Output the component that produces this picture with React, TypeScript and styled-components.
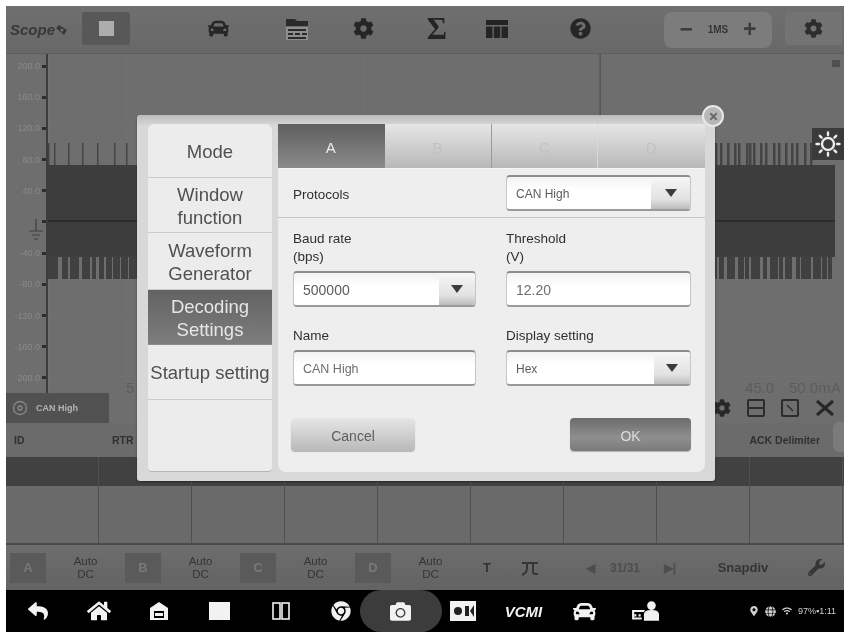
import React from "react";
import styled, { createGlobalStyle } from "styled-components";
import {
  FaCar,
  FaCog,
  FaQuestionCircle,
  FaReply,
  FaHome,
  FaCamera,
  FaChrome,
  FaWrench,
  FaMapMarkerAlt,
  FaGlobe,
  FaWifi,
  FaTimes,
} from "react-icons/fa";

const Global = createGlobalStyle`
  html, body { margin: 0; padding: 0; background: #fff; }
  body { font-family: "Liberation Sans", Arial, sans-serif; }
  * { box-sizing: border-box; }
`;

const Page = styled.div`
  width: 846px;
  height: 634px;
  padding: 6px 2px 2px 6px;
  background: #fff;
  overflow: hidden;
  filter: blur(0.7px);
`;

const Screen = styled.div`
  position: relative;
  width: 838px;
  height: 626px;
  display: flex;
  flex-direction: column;
  background: #6d6d6d;
`;

/* ---------- header ---------- */
const Header = styled.header`
  height: 48px;
  display: flex;
  align-items: center;
  padding: 0 0 0 4px;
  background: linear-gradient(#6f6f6f, #686868);
  border-bottom: 1px solid #5e5e5e;
`;
const Logo = styled.div`
  width: 72px;
  font: italic bold 15px "Liberation Sans", sans-serif;
  color: #383838;
  display: flex;
  align-items: center;
  gap: 1px;
`;
const StopButton = styled.div`
  width: 48px;
  height: 33px;
  margin-top: -2px;
  background: #585858;
  border-radius: 3px;
  display: flex;
  align-items: center;
  justify-content: center;
  &::before {
    content: "";
    width: 15px;
    height: 15px;
    background: #adadad;
  }
`;
const Toolbar = styled.div`
  display: flex;
  align-items: center;
  margin-left: 68px;
  height: 33px;
  margin-top: -2px;
`;
const ToolSlot = styled.div<{ $ml: number }>`
  width: 40px;
  height: 33px;
  margin-left: ${(p) => p.$ml}px;
  display: flex;
  align-items: center;
  justify-content: center;
  color: #262626;
  font-size: 21px;
`;
const Sigma = styled.span`
  font: bold 31px "Liberation Serif", serif;
  color: #242424;
  line-height: 1;
`;
const ZoomPill = styled.div`
  width: 108px;
  height: 36px;
  margin-left: 64px;
  background: #7c7c7c;
  border-radius: 8px;
  display: flex;
  align-items: center;
  justify-content: space-around;
  padding: 0 8px;
  color: #353535;
  font-size: 10px;
  font-weight: bold;
`;
const PillSign = styled.span`
  font-size: 23px;
  font-weight: bold;
  line-height: 1;
  color: #3c3c3c;
`;
const CornerButton = styled.div`
  width: 57px;
  height: 33px;
  margin-left: 13px;
  margin-top: -2px;
  background: #737373;
  border-radius: 3px 0 0 3px;
  display: flex;
  align-items: center;
  justify-content: center;
  color: #2d2d2d;
  font-size: 19px;
`;

/* ---------- chart ---------- */
const Chart = styled.section`
  position: relative;
  height: 339px;
  flex: none;
  display: flex;
  background: #6e6e6e;
`;
const Plot = styled.svg`
  position: absolute;
  left: 0;
  top: 0;
`;
const Axis = styled.div`
  position: relative;
  width: 42px;
  height: 339px;
  border-right: 2px solid #3d3d3d;
  display: flex;
  flex-direction: column;
  gap: 7.2px;
`;
const AxisRow = styled.div`
  height: 24px;
  display: flex;
  align-items: center;
  justify-content: flex-end;
  gap: 2px;
  font-size: 9px;
  color: #8a8a8a;
  white-space: nowrap;
  &::after {
    content: "";
    width: 4px;
    height: 3px;
    background: #2c2c2c;
  }
`;
const Ground = styled.svg`
  position: absolute;
  left: 22px;
  top: 165px;
`;
const SunButton = styled.div`
  position: absolute;
  right: 0;
  top: 74px;
  width: 32px;
  height: 32px;
  background: #3b3b3b;
  display: flex;
  align-items: center;
  justify-content: center;
`;
const TimeMark = styled.span<{ $x: number }>`
  position: absolute;
  left: ${(p) => p.$x}px;
  bottom: -3px;
  font-size: 15px;
  line-height: 16px;
  color: #5c5c5c;
  white-space: nowrap;
`;

/* ---------- decode table ---------- */
const ChannelRow = styled.div`
  height: 30px;
  flex: none;
  display: flex;
  align-items: center;
  background: #6e6e6e;
`;
const ChannelTag = styled.div`
  width: 103px;
  height: 30px;
  background: #515151;
  display: flex;
  align-items: center;
  gap: 8px;
  padding-left: 6px;
  font-size: 9px;
  font-weight: bold;
  color: #b4b4b4;
`;
const RowIcons = styled.div`
  margin-left: auto;
  display: flex;
  align-items: center;
  gap: 16px;
  padding-right: 9px;
  color: #282828;
`;
const TableHead = styled.div`
  height: 34px;
  flex: none;
  display: flex;
  align-items: center;
  padding-left: 8px;
  font-size: 10.5px;
  font-weight: bold;
  color: #303030;
  background: #6b6b6b;
`;
const HeadCell = styled.span<{ $w?: number }>`
  width: ${(p) => (p.$w ? `${p.$w}px` : "auto")};
  margin-left: ${(p) => (p.$w ? 0 : "auto")};
`;
const ScrollHandle = styled.span`
  width: 11px;
  height: 30px;
  margin-left: 13px;
  margin-top: -6px;
  border-radius: 6px 0 0 6px;
  background: #7b7b7b;
`;
const GridRow = styled.div<{ $h: number; $bg: string }>`
  height: ${(p) => p.$h}px;
  flex: none;
  background-color: ${(p) => p.$bg};
  background-image: repeating-linear-gradient(
    90deg,
    transparent 0 91.7px,
    #505050 91.7px 93px
  );
`;

/* ---------- channel bar ---------- */
const ChannelBar = styled.div`
  height: 47px;
  flex: none;
  display: flex;
  align-items: center;
  padding-left: 4px;
  border-top: 2px solid #4a4a4a;
  background: linear-gradient(#6d6d6d, #636363);
`;
const ChannelChip = styled.div`
  width: 36px;
  height: 30px;
  flex: none;
  display: flex;
  align-items: center;
  justify-content: center;
  background: #5a5a5a;
  color: #787878;
  font-size: 13px;
  font-weight: bold;
`;
const AutoLabel = styled.div`
  width: 79px;
  flex: none;
  text-align: center;
  font-size: 11.5px;
  line-height: 13px;
  color: #343434;
`;
const BarCell = styled.div<{ $w: number; $ml?: number; $dim?: boolean }>`
  width: ${(p) => p.$w}px;
  margin-left: ${(p) => p.$ml ?? 0}px;
  flex: none;
  text-align: center;
  white-space: nowrap;
  display: flex;
  align-items: center;
  justify-content: center;
  font-size: ${(p) => (p.$dim ? 12 : 13)}px;
  font-weight: bold;
  color: ${(p) => (p.$dim ? "#4d4d4d" : "#353535")};
`;

/* ---------- nav ---------- */
const Nav = styled.nav`
  height: 42px;
  flex: none;
  display: flex;
  align-items: center;
  padding-left: 1.5px;
  background: #000;
  color: #f2f2f2;
`;
const NavSlot = styled.div`
  width: 60.7px;
  flex: none;
  display: flex;
  align-items: center;
  justify-content: center;
  font-size: 20px;
`;
const CameraSlot = styled(NavSlot)`
  width: 82px;
  height: 42px;
  margin: 0 -10.65px;
  transform: translateX(-1px);
  border-radius: 21px;
  background: #3c3c3c;
`;
const VciLabel = styled.span`
  font: italic bold 15px "Liberation Sans", sans-serif;
`;
const StatusArea = styled.div`
  margin-left: auto;
  display: flex;
  align-items: center;
  gap: 6px;
  padding-right: 8px;
  font-size: 9px;
  color: #cfcfcf;
`;

/* ---------- dialog ---------- */
const Dialog = styled.div`
  position: absolute;
  left: 131px;
  top: 109px;
  width: 578px;
  height: 366px;
  padding: 9px 10px 9px 11px;
  display: flex;
  gap: 6px;
  border-radius: 3px;
  background: linear-gradient(#bcbcbc 0, #d8d8d8 3%, #d8d8d8 100%);
  box-shadow: 0 1px 2px rgba(0, 0, 0, 0.4);
`;
const CloseButton = styled.div`
  position: absolute;
  left: 565px;
  top: -10px;
  width: 22px;
  height: 22px;
  border-radius: 50%;
  background: #b7b7b7;
  border: 2px solid #e9e9e9;
  color: #6a6a6a;
  font-size: 11px;
  display: flex;
  align-items: center;
  justify-content: center;
`;
const Sidebar = styled.aside`
  width: 124px;
  flex: none;
  display: flex;
  flex-direction: column;
  background: #ececec;
  border-radius: 6px 6px 4px 4px;
  overflow: hidden;
  border-bottom: 1px solid #b5b5b5;
`;
const SideItem = styled.div<{ $h: number; $active?: boolean }>`
  height: ${(p) => p.$h}px;
  flex: none;
  display: flex;
  align-items: center;
  justify-content: center;
  text-align: center;
  white-space: nowrap;
  padding-top: 3px;
  font-size: 18.5px;
  line-height: 22.5px;
  color: ${(p) => (p.$active ? "#e6e6e6" : "#505050")};
  background: ${(p) =>
    p.$active ? "linear-gradient(#626262, #7d7d7d)" : "#ececec"};
  border-bottom: 1px solid ${(p) => (p.$active ? "#8b8b8b" : "#cbcbcb")};
`;
const Main = styled.main`
  width: 427px;
  flex: none;
  display: flex;
  flex-direction: column;
  background: #eeeeee;
  border-radius: 0 0 8px 8px;
`;
const Tabs = styled.div`
  height: 45px;
  flex: none;
  display: flex;
  border-bottom: 1px solid #f7f7f7;
`;
const Tab = styled.div<{ $active?: boolean; $sep?: string }>`
  flex: 1;
  display: flex;
  align-items: center;
  justify-content: center;
  padding-top: 2px;
  font-size: 15px;
  color: ${(p) => (p.$active ? "#ececec" : "#c2c2c2")};
  background: ${(p) =>
    p.$active
      ? "linear-gradient(#5f5f5f, #8a8a8a)"
      : "linear-gradient(#e6e6e6, #b8b8b8)"};
  border-right: 1px solid ${(p) => p.$sep ?? "transparent"};
`;
const ProtocolRow = styled.div`
  height: 49px;
  flex: none;
  display: flex;
  align-items: center;
  justify-content: space-between;
  padding: 0 14px 0 15px;
  border-bottom: 1px solid #c4c4c4;
`;
const FormGrid = styled.div`
  display: grid;
  grid-template-columns: 183px 185px;
  column-gap: 30px;
  row-gap: 20px;
  padding: 12px 14px 0 15px;
`;
const Field = styled.div`
  display: flex;
  flex-direction: column;
  justify-content: flex-end;
`;
const Label = styled.label`
  display: block;
  font-size: 13.5px;
  line-height: 18px;
  color: #2f2f2f;
  margin-bottom: 5px;
`;
const RowLabel = styled(Label)`
  margin: 0;
  padding-top: 3px;
`;
const TextBox = styled.input<{ $size?: number }>`
  display: block;
  width: 100%;
  height: 36px;
  padding: 2px 9px 0;
  font: ${(p) => p.$size ?? 14}px "Liberation Sans", sans-serif;
  color: #6e6e6e;
  background: linear-gradient(#f2f2f2, #ffffff 40%, #ffffff);
  border: 1px solid #c6c6c6;
  border-top: 2px solid #8d8d8d;
  border-bottom: 2px solid #9a9a9a;
  border-radius: 4px;
  outline: none;
`;
const SelectBox = styled.div<{ $w?: number }>`
  width: ${(p) => (p.$w ? `${p.$w}px` : "100%")};
  height: 36px;
  display: flex;
  overflow: hidden;
  background: linear-gradient(#f2f2f2, #ffffff 40%);
  border: 1px solid #c6c6c6;
  border-top: 2px solid #8d8d8d;
  border-bottom: 2px solid #9a9a9a;
  border-radius: 4px;
`;
const SelectText = styled.span<{ $size?: number }>`
  flex: 1;
  display: flex;
  align-items: center;
  padding: 2px 0 0 9px;
  font-size: ${(p) => p.$size ?? 12}px;
  color: #5c5c5c;
`;
const ArrowButton = styled.span<{ $w: number }>`
  width: ${(p) => p.$w}px;
  flex: none;
  display: flex;
  align-items: center;
  justify-content: center;
  background: linear-gradient(#f6f6f6, #e2e2e2 70%, #bdbdbd);
  &::before {
    content: "";
    border-left: 6px solid transparent;
    border-right: 6px solid transparent;
    border-top: 8px solid #3c3c3c;
  }
`;
const Actions = styled.div`
  display: flex;
  justify-content: space-between;
  margin-top: 32px;
  padding: 0 14px 0 13px;
`;
const ActionButton = styled.button<{ $primary?: boolean }>`
  width: ${(p) => (p.$primary ? 121 : 124)}px;
  height: 33px;
  padding-top: 3px;
  font: 14px "Liberation Sans", sans-serif;
  border: none;
  border-radius: 4px;
  color: ${(p) => (p.$primary ? "#dcdcdc" : "#5e5e5e")};
  background: ${(p) =>
    p.$primary
      ? "linear-gradient(#6c6c6c, #8f8f8f 60%, #7a7a7a)"
      : "linear-gradient(#e6e6e6, #b9b9b9)"};
  box-shadow: 0 1px 1px rgba(0, 0, 0, 0.25);
`;

/* ---------- drawings ---------- */
function rng(seed: number) {
  let s = seed;
  return () => {
    s = (s * 16807) % 2147483647;
    return s / 2147483647;
  };
}

const Waveform = () => {
  const r = rng(4711);
  const top: React.ReactElement[] = [];
  const bottom: React.ReactElement[] = [];
  for (let x = 42; x < 806; ) {
    const dense = x > 640;
    top.push(
      <rect key={`t${x}`} x={x} y={89} width={dense ? 2.5 : 1.5} height={22} fill="#444444" />
    );
    x += dense ? 3 + Math.round(r() * 5) : 5 + Math.round(r() * 14);
  }
  for (let x = 42; x < 829; ) {
    const w = 2 + Math.round(r() * 8);
    bottom.push(<rect key={`b${x}`} x={x} y={202} width={w} height={23} fill="#404040" />);
    x += w + 1 + Math.round(r() * 3);
  }
  const vlines = Array.from({ length: 10 }, (_, i) => 42 + i * 78.8);
  return (
    <Plot width={838} height={339} viewBox="0 0 838 339">
      {vlines.map((x, i) => (
        <rect key={x} x={x} y={0} width={1} height={339} fill={i === 7 ? "#4a4a4a" : "#727272"} />
      ))}
      {[73, 135, 197, 260, 322].map((y) => (
        <rect key={y} x={42} y={y} width={796} height={1} fill="#717171" />
      ))}
      <rect x={42} y={111} width={787} height={92} fill="#3d3d3d" />
      <rect x={42} y={166} width={787} height={2} fill="#2b2b2b" />
      {top}
      {bottom}
      <rect x={826} y={6} width={8} height={7} fill="#4f4f4f" />
    </Plot>
  );
};

const LogoMark = () => (
  <svg width="11" height="10" viewBox="0 0 11 10" fill="#383838">
    <path d="M0 3 3 0l8 5-3 5z" />
    <circle cx="6" cy="5" r="1.5" fill="#6f6f6f" />
  </svg>
);

const FolderIcon = () => (
  <svg width="24" height="24" viewBox="0 0 24 24" fill="#2a2a2a">
    <path d="M1 2h9l2 2h11v5H1z" />
    <path d="M1 10h22v13H1z" fill="#8e8e8e" />
    <path d="M3 12h18v2H3zM3 16h5v2H3zM10 16h5v2h-5zM17 16h5v2h-5zM3 20h18v2H3z" />
  </svg>
);

const PanelIcon = () => (
  <svg width="22" height="18" viewBox="0 0 22 18" fill="#242424">
    <path d="M0 0h22v5H0zM0 6.5h6.5V18H0zM7.8 6.5h6.5V18H7.8zM15.5 6.5H22V18h-6.5z" />
  </svg>
);

const TriggerIcon = () => (
  <svg width="18" height="16" viewBox="0 0 18 16" fill="none" stroke="#353535" strokeWidth="2">
    <path d="M1 3h16M6 3v5q0 5-5 7M12 3v9q0 2 3 2h2" />
  </svg>
);

const GarageIcon = () => (
  <svg width="20" height="18" viewBox="0 0 20 18" fill="#f2f2f2">
    <path fillRule="evenodd" d="M10 0 1 6v12h18V6zM5 9h10v7H5z" />
    <path d="M6 11h8v3H6z" />
  </svg>
);

const SplitIcon = () => (
  <svg width="18" height="18" viewBox="0 0 18 18" fill="none" stroke="#f2f2f2" strokeWidth="1.6">
    <rect x="1" y="1" width="7" height="16" />
    <rect x="10" y="1" width="7" height="16" />
  </svg>
);

const RecordIcon = () => (
  <svg width="26" height="20" viewBox="0 0 26 20">
    <rect width="26" height="20" fill="#f2f2f2" />
    <circle cx="8" cy="10" r="4" fill="#222" />
    <rect x="15" y="5" width="4" height="10" fill="#222" />
    <path d="M24 4v12l-4-6z" fill="#222" />
  </svg>
);

const ShareCarIcon = () => (
  <svg width="28" height="22" viewBox="0 0 26 20" fill="#f2f2f2">
    <path d="M1 9h12l-1 2H3v5h7v2H1z" />
    <circle cx="19" cy="5" r="4" />
    <path d="M12 19v-6q0-4 7-4t7 4v6z" />
    <path d="M3 13h2v2H3zM7 13h2v2H7z" />
  </svg>
);

const SunIcon = () => (
  <svg width="26" height="26" viewBox="0 0 26 26" fill="none" stroke="#ececec" strokeWidth="2.4">
    <circle cx="13" cy="13" r="6" />
    <path
      strokeLinecap="round"
      d="M13 1.5v2.5M13 22v2.5M1.5 13H4M22 13h2.5M4.8 4.8l1.8 1.8M19.4 19.4l1.8 1.8M4.8 21.2l1.8-1.8M19.4 6.6l1.8-1.8"
    />
  </svg>
);

const MinusBox = () => (
  <svg width="18" height="18" viewBox="0 0 18 18" fill="none" stroke="#2c2c2c" strokeWidth="2">
    <rect x="1" y="1" width="16" height="16" rx="1" />
    <path d="M1 9h16" />
  </svg>
);

const ExpandBox = () => (
  <svg width="18" height="18" viewBox="0 0 18 18" fill="none" stroke="#2c2c2c" strokeWidth="2">
    <rect x="1" y="1" width="16" height="16" rx="1" />
    <path d="m6 6 6 6" strokeWidth="1.5" />
  </svg>
);

const CloseCross = () => (
  <svg width="20" height="18" viewBox="0 0 20 18" fill="none" stroke="#282828" strokeWidth="3">
    <path d="m2 2 16 14M18 2 2 16" />
  </svg>
);

const Target = () => (
  <svg width="16" height="16" viewBox="0 0 16 16" fill="none" stroke="#8a8a8a" strokeWidth="1.3">
    <circle cx="8" cy="8" r="6.5" />
    <circle cx="8" cy="8" r="2" />
  </svg>
);

const axisLabels = ["200.0", "160.0", "120.0", "80.0", "40.0", "", "-40.0", "-80.0", "-120.0", "-160.0", "-200.0"];

const App = () => (
  <Page>
    <Global />
    <Screen>
      <Header>
        <Logo>Scope<LogoMark /></Logo>
        <StopButton />
        <Toolbar>
          <ToolSlot $ml={0}><FaCar /></ToolSlot>
          <ToolSlot $ml={39}><FolderIcon /></ToolSlot>
          <ToolSlot $ml={26}><FaCog /></ToolSlot>
          <ToolSlot $ml={34}><Sigma>Σ</Sigma></ToolSlot>
          <ToolSlot $ml={20}><PanelIcon /></ToolSlot>
          <ToolSlot $ml={43}><FaQuestionCircle /></ToolSlot>
        </Toolbar>
        <ZoomPill>
          <PillSign>−</PillSign>
          1MS
          <PillSign>+</PillSign>
        </ZoomPill>
        <CornerButton><FaCog /></CornerButton>
      </Header>

      <Chart>
        <Waveform />
        <Axis>
          {axisLabels.map((l, i) => (
            <AxisRow key={i}>{l}</AxisRow>
          ))}
          <Ground width="16" height="22" viewBox="0 0 16 22" fill="none" stroke="#404040" strokeWidth="1.2">
            <path d="M8 0v12M1 12h14M4 16h8M6 20h4" />
          </Ground>
        </Axis>
        <SunButton><SunIcon /></SunButton>
        <TimeMark $x={120}>5.0</TimeMark>
        <TimeMark $x={739}>45.0</TimeMark>
        <TimeMark $x={783}>50.0mA</TimeMark>
      </Chart>

      <ChannelRow>
        <ChannelTag>
          <Target />
          CAN High
        </ChannelTag>
        <RowIcons>
          <FaCog size={18} />
          <MinusBox />
          <ExpandBox />
          <CloseCross />
        </RowIcons>
      </ChannelRow>
      <TableHead>
        <HeadCell $w={98}>ID</HeadCell>
        <HeadCell $w={40}>RTR</HeadCell>
        <HeadCell>ACK Delimiter</HeadCell>
        <ScrollHandle />
      </TableHead>
      <GridRow $h={29} $bg="#414141" />
      <GridRow $h={57} $bg="#6a6a6a" />

      <ChannelBar>
        <ChannelChip>A</ChannelChip>
        <AutoLabel>Auto<br />DC</AutoLabel>
        <ChannelChip>B</ChannelChip>
        <AutoLabel>Auto<br />DC</AutoLabel>
        <ChannelChip>C</ChannelChip>
        <AutoLabel>Auto<br />DC</AutoLabel>
        <ChannelChip>D</ChannelChip>
        <AutoLabel>Auto<br />DC</AutoLabel>
        <BarCell $w={34}>T</BarCell>
        <BarCell $w={52}><TriggerIcon /></BarCell>
        <BarCell $w={40} $ml={14} $dim>◀</BarCell>
        <BarCell $w={30} $dim>31/31</BarCell>
        <BarCell $w={30} $ml={15} $dim>▶|</BarCell>
        <BarCell $w={60} $ml={28}>Snapdiv</BarCell>
        <BarCell $w={30} $ml={28}><FaWrench size={17} /></BarCell>
      </ChannelBar>

      <Nav>
        <NavSlot><FaReply /></NavSlot>
        <NavSlot><FaHome size={24} /></NavSlot>
        <NavSlot><GarageIcon /></NavSlot>
        <NavSlot><svg width="21" height="18"><rect width="21" height="18" fill="#f2f2f2" /></svg></NavSlot>
        <NavSlot><SplitIcon /></NavSlot>
        <NavSlot><FaChrome /></NavSlot>
        <CameraSlot><FaCamera size={21} /></CameraSlot>
        <NavSlot><RecordIcon /></NavSlot>
        <NavSlot><VciLabel>VCMI</VciLabel></NavSlot>
        <NavSlot><FaCar size={23} /></NavSlot>
        <NavSlot><ShareCarIcon /></NavSlot>
        <StatusArea>
          <FaMapMarkerAlt size={10} />
          <FaGlobe size={11} />
          <FaWifi size={10} />
          <span>97%▪1:11</span>
        </StatusArea>
      </Nav>

      <Dialog>
        <CloseButton><FaTimes /></CloseButton>
        <Sidebar>
          <SideItem $h={54}>Mode</SideItem>
          <SideItem $h={55}>Window<br />function</SideItem>
          <SideItem $h={57}>Waveform<br />Generator</SideItem>
          <SideItem $h={55} $active>Decoding<br />Settings</SideItem>
          <SideItem $h={55}>Startup setting</SideItem>
        </Sidebar>
        <Main>
          <Tabs>
            <Tab $active>A</Tab>
            <Tab $sep="#9a9a9a">B</Tab>
            <Tab $sep="#dadada">C</Tab>
            <Tab>D</Tab>
          </Tabs>
          <ProtocolRow>
            <RowLabel>Protocols</RowLabel>
            <SelectBox $w={185}>
              <SelectText>CAN High</SelectText>
              <ArrowButton $w={39} />
            </SelectBox>
          </ProtocolRow>
          <FormGrid>
            <Field>
              <Label>Baud rate<br />(bps)</Label>
              <SelectBox>
                <SelectText $size={14}>500000</SelectText>
                <ArrowButton $w={36} />
              </SelectBox>
            </Field>
            <Field>
              <Label>Threshold<br />(V)</Label>
              <TextBox readOnly value="12.20" />
            </Field>
            <Field>
              <Label>Name</Label>
              <TextBox readOnly value="CAN High" $size={12.5} />
            </Field>
            <Field>
              <Label>Display setting</Label>
              <SelectBox>
                <SelectText>Hex</SelectText>
                <ArrowButton $w={36} />
              </SelectBox>
            </Field>
          </FormGrid>
          <Actions>
            <ActionButton>Cancel</ActionButton>
            <ActionButton $primary>OK</ActionButton>
          </Actions>
        </Main>
      </Dialog>
    </Screen>
  </Page>
);

export default App;
